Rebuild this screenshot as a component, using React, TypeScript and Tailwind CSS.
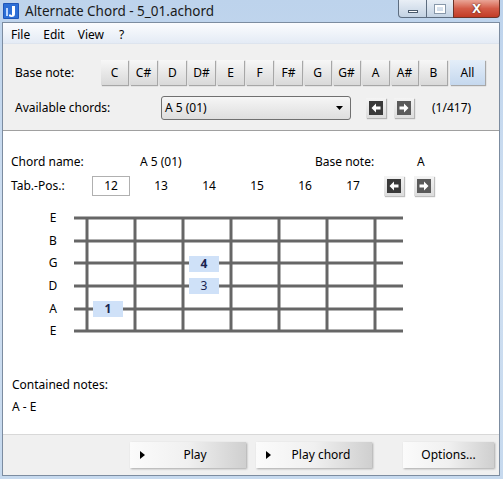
import React from "react";

const notes = ["C", "C#", "D", "D#", "E", "F", "F#", "G", "G#", "A", "A#", "B"];
const frets = [87, 135, 183, 231, 279, 327, 375];
const strings = [
  { name: "E", y: 217 },
  { name: "B", y: 240 },
  { name: "G", y: 262 },
  { name: "D", y: 285 },
  { name: "A", y: 308 },
  { name: "E", y: 330 },
];

function ArrowButton({ dir, light }: { dir: "left" | "right"; light?: boolean }) {
  return (
    <div className="w-[20px] h-[20px] flex items-center justify-center bg-gradient-to-b from-[#f4f4f4] to-[#dcdcdc] shadow-[1px_1px_1px_rgba(0,0,0,0.25)]">
      <svg width="14" height="14" viewBox="0 0 14 14">
        <rect x="0" y="0" width="14" height="14" fill={light ? "#5a5a5a" : "#3a3a3a"} />
        {dir === "left" ? (
          <path d="M2.5 7 L7 2.5 L7 5.5 L11.5 5.5 L11.5 8.5 L7 8.5 L7 11.5 Z" fill="#ffffff" />
        ) : (
          <path d="M11.5 7 L7 2.5 L7 5.5 L2.5 5.5 L2.5 8.5 L7 8.5 L7 11.5 Z" fill="#ffffff" />
        )}
      </svg>
    </div>
  );
}

function BigButton({ label, play, w }: { label: string; play?: boolean; w: string }) {
  return (
    <div
      className={`${w} h-[26px] relative flex items-center justify-center bg-gradient-to-r from-[#fbfbfb] via-[#f0f0f0] to-[#cfcfcf] shadow-[1px_1px_2px_rgba(0,0,0,0.3)]`}
    >
      {play && (
        <svg className="absolute left-[10px] top-[9px]" width="5" height="8" viewBox="0 0 5 8">
          <path d="M0 0 L5 4 L0 8 Z" fill="#000" />
        </svg>
      )}
      <span className={play ? "pl-[14px]" : ""}>{label}</span>
    </div>
  );
}

export default function App() {
  return (
    <div
      className="w-[503px] h-[479px] flex flex-col bg-gradient-to-b from-[#bdd3ec] via-[#cfdff1] to-[#c6d9ee] text-[12px] text-black overflow-hidden"
      style={{ fontFamily: '"Noto Sans", "Liberation Sans", sans-serif' }}
    >
      {/* title bar */}
      <div className="h-[22px] flex items-start shrink-0">
        <svg className="mt-[3px] ml-[3px]" width="16" height="16" viewBox="0 0 16 16">
          <rect x="0" y="0" width="16" height="16" rx="1" fill="#1f56b8" />
          <rect x="1" y="1" width="14" height="14" fill="#2c6fd6" />
          <path d="M9 3 L12 3 L12 11 Q12 14 8.5 14 Q5.5 14 6 11.5 L8 11.5 Q8 12.5 9 12.2 Z" fill="#ffffff" />
          <path d="M3 5 L5 5 L5 13 L3 13 Z" fill="#bcd6ff" />
        </svg>
        <div className="ml-[6px] mt-[1px] text-[13.5px] text-[#1a1a1a]">Alternate Chord - 5_01.achord</div>
        <div className="ml-auto mr-[3px] flex h-[18px]">
          <div className="w-[29px] h-full border border-[#5d6d80] border-t-0 rounded-bl-[4px] bg-gradient-to-b from-[#e9eff6] to-[#c3d2e3] flex items-center justify-center">
            <div className="w-[10px] h-[3px] bg-white border border-[#4a5a6c] mt-[5px]" />
          </div>
          <div className="w-[26px] h-full border-b border-[#5d6d80] bg-gradient-to-b from-[#e9eff6] to-[#c3d2e3] flex items-center justify-center">
            <div className="w-[10px] h-[8px] border-2 border-white outline outline-1 outline-[#8898aa]" />
          </div>
          <div className="w-[47px] h-full border border-[#6d3328] border-t-0 rounded-br-[4px] bg-gradient-to-b from-[#e9a597] via-[#d35b47] to-[#c23b25] flex items-center justify-center">
            <span className="text-white font-bold text-[13px] leading-none [text-shadow:0_0_2px_#3a1a10]">X</span>
          </div>
        </div>
      </div>

      {/* client area */}
      <div className="flex-1 flex flex-col ml-[2px] mr-[3px] mb-[3px] border border-[#7c8ca0] bg-[#f0f0f0]">
        {/* menu */}
        <div className="h-[21px] pt-[3px] flex items-center bg-gradient-to-b from-[#fbfcfe] to-[#e4ebf5] border-b border-[#dde4ee] shrink-0">
          <span className="ml-[8px]">File</span>
          <span className="ml-[13px]">Edit</span>
          <span className="ml-[13px]">View</span>
          <span className="ml-[15px]">?</span>
        </div>

        {/* top panel */}
        <div className="h-[86px] shrink-0 flex flex-col">
          <div className="flex items-center mt-[16px] h-[25px]">
            <span className="ml-[12px] w-[86px]">Base note:</span>
            <div className="flex gap-[2px]">
              {notes.map((n) => (
                <div
                  key={n}
                  className="w-[27px] h-[25px] flex items-center justify-center bg-gradient-to-b from-[#f7f7f7] to-[#d9d9d9] shadow-[1px_1px_1px_rgba(0,0,0,0.3)]"
                >
                  {n}
                </div>
              ))}
              <div className="w-[35px] h-[25px] ml-[1px] flex items-center justify-center bg-gradient-to-b from-[#e4eef9] to-[#c5d8ee] shadow-[1px_1px_1px_rgba(0,0,0,0.3)]">
                All
              </div>
            </div>
          </div>
          <div className="flex items-center mt-[11px] h-[24px]">
            <span className="ml-[12px] w-[146px]">Available chords:</span>
            <div className="w-[190px] h-[24px] rounded-[3px] border border-[#707070] bg-gradient-to-b from-[#f6f6f6] to-[#dedede] flex items-center px-[3px]">
              <span>A 5 (01)</span>
              <svg className="ml-auto mr-[4px]" width="7" height="4" viewBox="0 0 7 4">
                <path d="M0 0 L7 0 L3.5 4 Z" fill="#000" />
              </svg>
            </div>
            <div className="ml-[15px] flex gap-[8px]">
              <ArrowButton dir="left" />
              <ArrowButton dir="right" light />
            </div>
            <span className="ml-[18px]">(1/417)</span>
          </div>
        </div>

        {/* white panel */}
        <div className="flex-1 bg-white border-t border-[#a0a0a0] border-b-[#d8d8d8] border-b flex flex-col">
          <div className="flex items-center h-[20px] mt-[21px]">
            <span className="ml-[8px] w-[129px]">Chord name:</span>
            <span className="w-[175px]">A 5 (01)</span>
            <span className="w-[102px]">Base note:</span>
            <span>A</span>
          </div>
          <div className="flex items-center h-[20px] mt-[4px]">
            <span className="ml-[8px] w-[81px]">Tab.-Pos.:</span>
            <div className="w-[38px] h-[20px] border border-[#b0b0b0] flex items-center justify-center">12</div>
            <div className="ml-[7px] flex">
              {["13", "14", "15", "16", "17"].map((t) => (
                <span key={t} className="w-[48px] text-center">
                  {t}
                </span>
              ))}
            </div>
            <div className="ml-[7px] flex gap-[10px]">
              <ArrowButton dir="left" />
              <ArrowButton dir="right" light />
            </div>
          </div>

          <svg className="mt-[10px]" width="420" height="135" viewBox="3 205 420 135">
            {strings.map((s, i) => (
              <g key={i}>
                <text x="53" y={s.y + 4} fontSize="12" textAnchor="middle" fill="#000">
                  {s.name}
                </text>
                <line x1="74" y1={s.y} x2="403" y2={s.y} stroke="#666666" strokeWidth="3" />
              </g>
            ))}
            {frets.map((x) => (
              <line key={x} x1={x} y1="216" x2={x} y2="331" stroke="#666666" strokeWidth="3" />
            ))}
            <rect x="93" y="300" width="30" height="16" fill="#cfe1f8" />
            <text x="108" y="312" fontSize="12" fontWeight="bold" textAnchor="middle" fill="#1a2450">1</text>
            <rect x="189" y="255" width="30" height="16" fill="#cfe1f8" />
            <text x="204" y="267" fontSize="12" fontWeight="bold" textAnchor="middle" fill="#1a2450">4</text>
            <rect x="189" y="277" width="30" height="16" fill="#cfe1f8" />
            <text x="204" y="289" fontSize="12" textAnchor="middle" fill="#1a2450">3</text>
          </svg>

          <div className="ml-[9px] mt-[35px]">Contained notes:</div>
          <div className="ml-[9px] mt-[4px]">A - E</div>
        </div>

        {/* bottom bar */}
        <div className="h-[40px] shrink-0 flex items-center">
          <div className="ml-[127px]">
            <BigButton label="Play" play w="w-[116px]" />
          </div>
          <div className="ml-[10px]">
            <BigButton label="Play chord" play w="w-[116px]" />
          </div>
          <div className="ml-[31px]">
            <BigButton label="Options..." w="w-[91px]" />
          </div>
        </div>
      </div>
    </div>
  );
}
